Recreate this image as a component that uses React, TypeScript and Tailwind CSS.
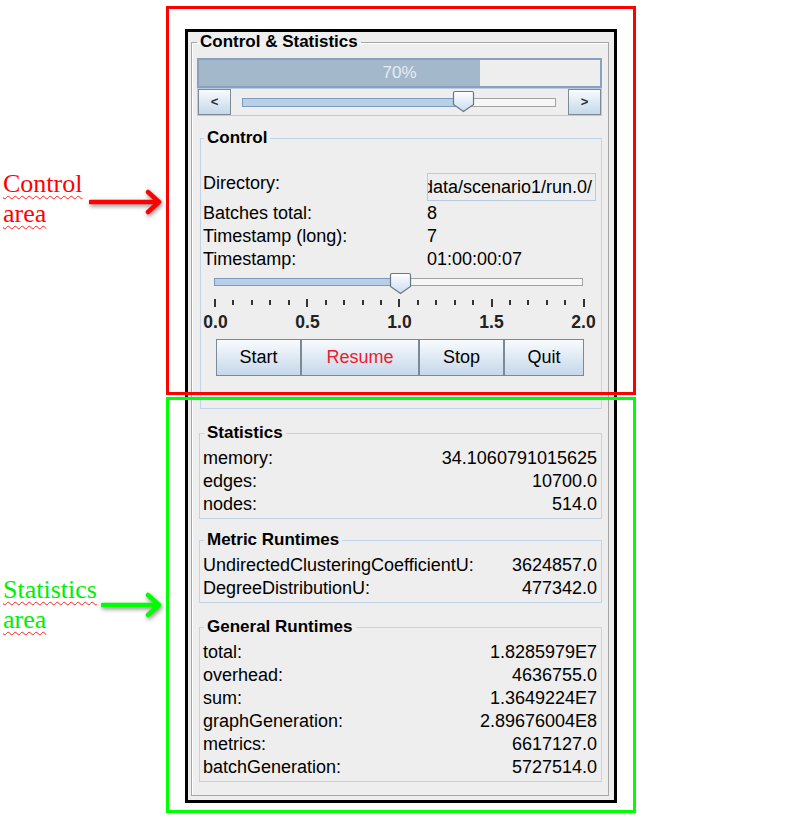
import React from "react";

type Pair = [string, string];

const stats: Pair[] = [
  ["memory:", "34.1060791015625"],
  ["edges:", "10700.0"],
  ["nodes:", "514.0"],
];

const metrics: Pair[] = [
  ["UndirectedClusteringCoefficientU:", "3624857.0"],
  ["DegreeDistributionU:", "477342.0"],
];

const general: Pair[] = [
  ["total:", "1.8285979E7"],
  ["overhead:", "4636755.0"],
  ["sum:", "1.3649224E7"],
  ["graphGeneration:", "2.89676004E8"],
  ["metrics:", "6617127.0"],
  ["batchGeneration:", "5727514.0"],
];

function Group({
  title,
  className,
  children,
}: {
  title: string;
  className: string;
  children: React.ReactNode;
}) {
  return (
    <fieldset className={"border border-[#c2d4e7] " + className}>
      <legend className="ml-[1px] px-[3px] text-[17px] font-bold leading-[20px]">{title}</legend>
      {children}
    </fieldset>
  );
}

function Rows({ rows }: { rows: Pair[] }) {
  return (
    <div className="flex flex-col">
      {rows.map(([k, v]) => (
        <div key={k} className="flex h-[23px] justify-between leading-[23px]">
          <span>{k}</span>
          <span>{v}</span>
        </div>
      ))}
    </div>
  );
}

function Thumb() {
  return (
    <svg width="23" height="23" viewBox="0 0 23 23">
      <defs>
        <linearGradient id="tg" x1="0" y1="0" x2="0" y2="1">
          <stop offset="0" stopColor="#ffffff" />
          <stop offset="1" stopColor="#c9dcf0" />
        </linearGradient>
      </defs>
      <path
        d="M3 1.5 H20 Q21.5 1.5 21.5 3 V14.5 L11.5 21.5 L1.5 14.5 V3 Q1.5 1.5 3 1.5 Z"
        fill="url(#tg)"
        stroke="#6a7886"
        strokeWidth="1.2"
      />
    </svg>
  );
}

function Arrow({ color, width }: { color: string; width: number }) {
  return (
    <svg width={width + 6} height="30" viewBox={`0 0 ${width + 6} 30`} className="drop-shadow-[1px_2px_2px_rgba(0,0,0,0.45)]">
      <line x1="1" y1="14" x2={width - 2} y2="14" stroke={color} strokeWidth="4.5" strokeLinecap="round" />
      <polyline
        points={`${width - 12},4 ${width - 1},14 ${width - 12},24`}
        fill="none"
        stroke={color}
        strokeWidth="4.5"
        strokeLinecap="round"
        strokeLinejoin="round"
      />
    </svg>
  );
}

const btn =
  "flex items-center justify-center border border-[#7c8a97] bg-linear-to-b from-[#f8fbfd] to-[#c6d8ea]";

const wavy = "underline decoration-[#ff2020] decoration-wavy decoration-1 underline-offset-[3px]";

export default function App() {
  const ticks = Array.from({ length: 21 }, (_, i) => i);
  return (
    <div className="relative flex h-[820px] w-[800px] overflow-hidden bg-white font-['Liberation_Sans',Arial,sans-serif] text-[18px] text-black">
      {/* annotations on the left */}
      <div className="flex w-[166px] flex-col pt-[169px] font-['Liberation_Serif','Times_New_Roman',serif] text-[26px] leading-[30px]">
        <div className="flex items-start">
          <div className="w-[93px] pl-[3px] text-[#ff0000]">
            <div><span className={wavy}>Control</span></div>
            <div><span className={wavy}>area</span></div>
          </div>
          <div className="mt-[19px]">
            <Arrow color="#ff0000" width={71} />
          </div>
        </div>
        <div className="mt-[346px] flex items-start">
          <div className="w-[104px] pl-[3px] text-[#00ee00]">
            <div><span className={wavy}>Statistics</span></div>
            <div><span className={wavy}>area</span></div>
          </div>
          <div className="mt-[16px]">
            <Arrow color="#00ff00" width={59} />
          </div>
        </div>
      </div>

      {/* the window */}
      <div className="pl-[19px] pt-[29px]">
        <div className="flex h-[774px] w-[432px] flex-col border-[3px] border-black bg-[#eeeeee] pb-[4px] pl-[3px] pr-[5px]">
          <fieldset className="flex flex-1 flex-col border border-[#a6a6a6] pl-[5px] pr-[6px] shadow-[inset_1px_1px_0_#ffffff]">
            <legend className="px-[3px] text-[17px] font-bold leading-[20px]">Control &amp; Statistics</legend>

            {/* progress */}
            <div className="relative mt-[6px] flex h-[30px] border-2 border-[#8aa1bd] bg-[#eeeeee]">
              <div className="h-full w-[281px] bg-[#a4b8cc]" />
              <div className="absolute inset-0 flex items-center justify-center text-[17px] text-[#e6ebf1]">70%</div>
            </div>

            {/* scroll bar */}
            <div className="flex h-[28px] border border-[#b8cce1]">
              <div className={btn + " w-[33px] text-[13px] font-bold text-[#2a2a3a]"}>&lt;</div>
              <div className="relative flex flex-1 pt-[9px]">
                <div className="ml-[11px] flex h-[9px] w-[314px]">
                  <div className="h-full w-[221px] border border-[#7d9bc1] bg-[#b8cfe8]" />
                  <div className="h-full flex-1 border border-[#a2a2a2] bg-[#f6f6f6]" />
                </div>
                <div className="absolute left-[221px] top-[1px]">
                  <Thumb />
                </div>
              </div>
              <div className={btn + " w-[33px] text-[13px] font-bold text-[#2a2a3a]"}>&gt;</div>
            </div>

            {/* control */}
            <Group title="Control" className="ml-[3px] mt-[12px] pb-[32px] pl-[2px] pr-[4px]">
              <div className="mt-[25px] flex h-[29px] items-start">
                <span className="w-[224px] leading-[20px]">Directory:</span>
                <div className="flex h-[28px] w-[169px] items-center justify-end overflow-hidden whitespace-nowrap border border-[#b6cbe0] pr-[3px]">
                  ./data/scenario1/run.0/
                </div>
              </div>
              {[
                ["Batches total:", "8"],
                ["Timestamp (long):", "7"],
                ["Timestamp:", "01:00:00:07"],
              ].map(([k, v]) => (
                <div key={k} className="flex h-[23px] leading-[23px]">
                  <span className="w-[224px]">{k}</span>
                  <span>{v}</span>
                </div>
              ))}

              {/* slider */}
              <div className="relative flex h-[24px] pt-[7px]">
                <div className="ml-[11px] flex h-[8px] w-[369px]">
                  <div className="h-full w-[186px] border border-[#7d9bc1] bg-[#b8cfe8]" />
                  <div className="h-full flex-1 border border-[#a2a2a2] bg-[#f6f6f6]" />
                </div>
                <div className="absolute left-[186px] top-[1px]">
                  <Thumb />
                </div>
              </div>
              <div className="ml-[11px] mt-[4px] flex h-[8px] w-[371px] items-start justify-between">
                {ticks.map((i) => (
                  <div key={i} className={i % 5 === 0 ? "h-[8px] w-[2px] bg-[#333]" : "mt-[1px] h-[5px] w-[2px] bg-[#333]"} />
                ))}
              </div>
              <div className="mt-[5px] flex w-[393px] justify-between text-[17.5px] font-bold leading-[20px] text-[#222]">
                {["0.0", "0.5", "1.0", "1.5", "2.0"].map((t) => (
                  <span key={t} className="w-[25px] text-center">{t}</span>
                ))}
              </div>
              <div className="ml-[13px] mt-[7px] flex h-[37px]">
                <div className={btn + " w-[85px]"}>Start</div>
                <div className={btn + " w-[118px] text-[#ee1c2a]"}>Resume</div>
                <div className={btn + " w-[85px]"}>Stop</div>
                <div className={btn + " w-[80px]"}>Quit</div>
              </div>
            </Group>

            <Group title="Statistics" className="ml-[2px] mt-[14px] pb-[2px] pl-[3px] pr-[4px] pt-[4px]">
              <Rows rows={stats} />
            </Group>
            <Group title="Metric Runtimes" className="ml-[2px] mt-[11px] pb-[2px] pl-[3px] pr-[4px] pt-[4px]">
              <Rows rows={metrics} />
            </Group>
            <Group title="General Runtimes" className="ml-[2px] mt-[14px] pb-[2px] pl-[3px] pr-[4px] pt-[4px]">
              <Rows rows={general} />
            </Group>
          </fieldset>
        </div>
      </div>

      {/* highlight frames over the window */}
      <div className="pointer-events-none absolute left-[166px] top-[6px] h-[389px] w-[470px] border-[3px] border-[#ff0000]" />
      <div className="pointer-events-none absolute left-[166px] top-[397px] h-[416px] w-[470px] border-[3px] border-[#00ff00]" />
    </div>
  );
}
